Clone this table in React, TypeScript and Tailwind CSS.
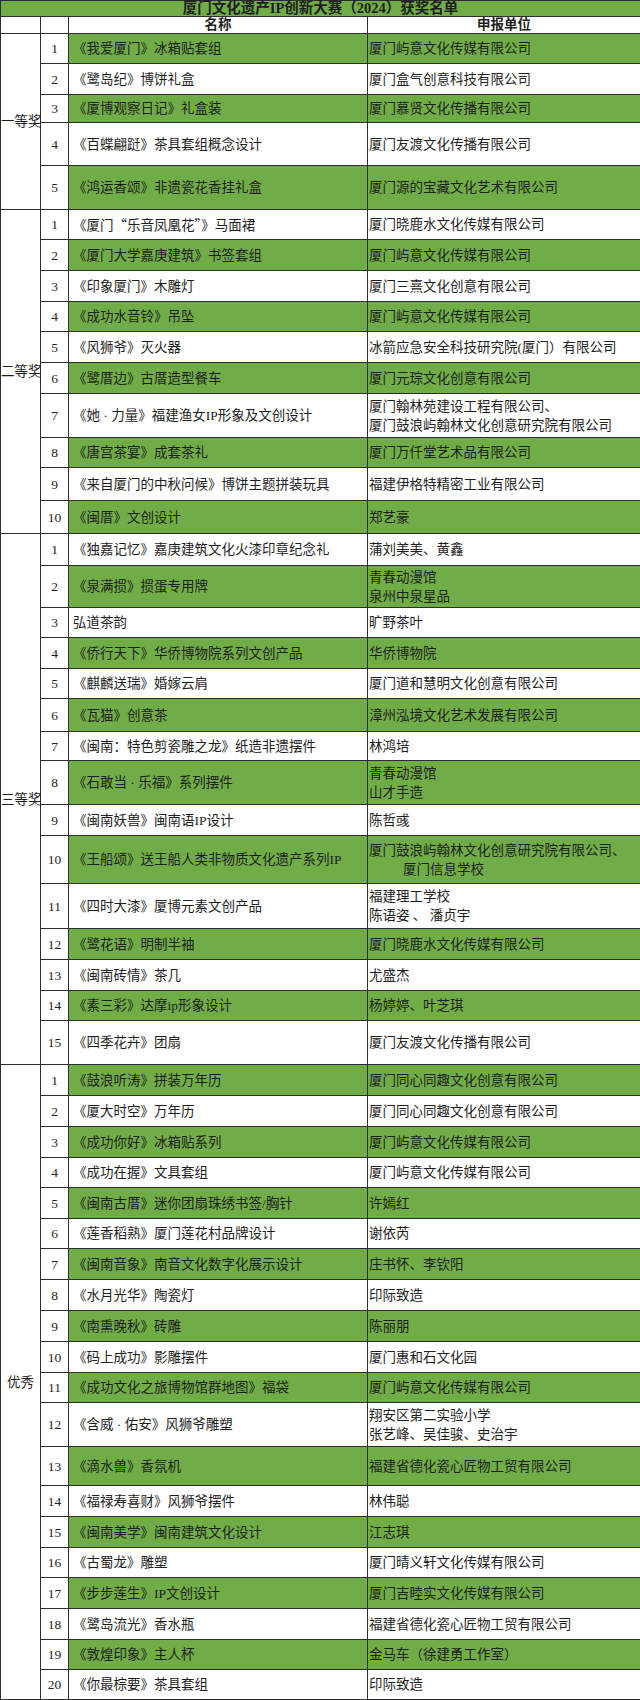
import type { ReactNode } from 'react';

type Row = [name: ReactNode, unit: ReactNode, h: string];

type Group = {
  label: string;
  firstGreen: boolean;
  rows: Row[];
};

const two = (a: string, b: string) => (
  <>
    <div>{a}</div>
    <div>{b}</div>
  </>
);

// full-width quote marks, as the CJK font draws them
const cjk = { fontFamily: '"Noto Sans CJK SC", sans-serif' };

const groups: Group[] = [
  {
    label: '一等奖',
    firstGreen: true,
    rows: [
      ['《我爱厦门》冰箱贴套组', '厦门屿意文化传媒有限公司', 'h-[30px]'],
      ['《鹭岛纪》博饼礼盒', '厦门盒气创意科技有限公司', 'h-[31px]'],
      ['《厦博观察日记》礼盒装', '厦门慕贤文化传播有限公司', 'h-[28px]'],
      ['《百蝶翩跹》茶具套组概念设计', '厦门友渡文化传播有限公司', 'h-[43px]'],
      ['《鸿运香颂》非遗瓷花香挂礼盒', '厦门源的宝藏文化艺术有限公司', 'h-[44px]'],
    ],
  },
  {
    label: '二等奖',
    firstGreen: false,
    rows: [
      [
        <>
          《厦门<span style={cjk}>“</span>乐音凤凰花<span style={cjk}>”</span>》马面裙
        </>,
        '厦门晓鹿水文化传媒有限公司',
        'h-[30px]',
      ],
      ['《厦门大学嘉庚建筑》书签套组', '厦门屿意文化传媒有限公司', 'h-[31px]'],
      ['《印象厦门》木雕灯', '厦门三熹文化创意有限公司', 'h-[31px]'],
      ['《成功水音铃》吊坠', '厦门屿意文化传媒有限公司', 'h-[30px]'],
      ['《风狮爷》灭火器', '冰箭应急安全科技研究院(厦门）有限公司', 'h-[31px]'],
      ['《鹭厝边》古厝造型餐车', '厦门元琮文化创意有限公司', 'h-[31px]'],
      [
        '《她 · 力量》福建渔女IP形象及文创设计',
        two('厦门翰林苑建设工程有限公司、', '厦门鼓浪屿翰林文化创意研究院有限公司'),
        'h-[44px]',
      ],
      ['《唐宫茶宴》成套茶礼', '厦门万仟堂艺术品有限公司', 'h-[30px]'],
      ['《来自厦门的中秋问候》博饼主题拼装玩具', '福建伊格特精密工业有限公司', 'h-[33px]'],
      ['《闽厝》文创设计', '郑艺豪', 'h-[33px]'],
    ],
  },
  {
    label: '三等奖',
    firstGreen: false,
    rows: [
      ['《独嘉记忆》嘉庚建筑文化火漆印章纪念礼', '蒲刘美美、黄鑫', 'h-[32px]'],
      ['《泉满掼》掼蛋专用牌', two('青春动漫馆', '泉州中泉星品'), 'h-[42px]'],
      ['弘道茶韵', '旷野茶叶', 'h-[30px]'],
      ['《侨行天下》华侨博物院系列文创产品', '华侨博物院', 'h-[31px]'],
      ['《麒麟送瑞》婚嫁云肩', '厦门道和慧明文化创意有限公司', 'h-[30px]'],
      ['《瓦猫》创意茶', '漳州泓境文化艺术发展有限公司', 'h-[33px]'],
      ['《闽南：特色剪瓷雕之龙》纸造非遗摆件', '林鸿培', 'h-[29px]'],
      ['《石敢当 · 乐福》系列摆件', two('青春动漫馆', '山才手造'), 'h-[44px]'],
      ['《闽南妖兽》闽南语IP设计', '陈哲彧', 'h-[31px]'],
      [
        '《王船颂》送王船人类非物质文化遗产系列IP',
        <>
          <div>厦门鼓浪屿翰林文化创意研究院有限公司、</div>
          <div className="pl-[34px]">厦门信息学校</div>
        </>,
        'h-[48px]',
      ],
      ['《四时大漆》厦博元素文创产品', two('福建理工学校', '陈语姿 、 潘贞宇'), 'h-[45px]'],
      ['《鹭花语》明制半袖', '厦门晓鹿水文化传媒有限公司', 'h-[31px]'],
      ['《闽南砖情》茶几', '尤盛杰', 'h-[31px]'],
      ['《素三彩》达摩ip形象设计', '杨婷婷、叶芝琪', 'h-[30px]'],
      ['《四季花卉》团扇', '厦门友渡文化传播有限公司', 'h-[44px]'],
    ],
  },
  {
    label: '优秀',
    firstGreen: true,
    rows: [
      ['《鼓浪听涛》拼装万年历', '厦门同心同趣文化创意有限公司', 'h-[31px]'],
      ['《厦大时空》万年历', '厦门同心同趣文化创意有限公司', 'h-[31px]'],
      ['《成功你好》冰箱贴系列', '厦门屿意文化传媒有限公司', 'h-[31px]'],
      ['《成功在握》文具套组', '厦门屿意文化传媒有限公司', 'h-[30px]'],
      ['《闽南古厝》迷你团扇珠绣书签/胸针', '许嫣红', 'h-[31px]'],
      ['《莲香稻熟》厦门莲花村品牌设计', '谢依芮', 'h-[30px]'],
      ['《闽南音象》南音文化数字化展示设计', '庄书怀、李钦阳', 'h-[31px]'],
      ['《水月光华》陶瓷灯', '印际致造', 'h-[31px]'],
      ['《南熏晚秋》砖雕', '陈丽朋', 'h-[31px]'],
      ['《码上成功》影雕摆件', '厦门惠和石文化园', 'h-[31px]'],
      ['《成功文化之旅博物馆群地图》福袋', '厦门屿意文化传媒有限公司', 'h-[30px]'],
      ['《含威 · 佑安》风狮爷雕塑', two('翔安区第二实验小学', '张艺峰、吴佳骏、史治宇'), 'h-[44px]'],
      ['《滴水兽》香氛机', '福建省德化瓷心匠物工贸有限公司', 'h-[39px]'],
      ['《福禄寿喜财》风狮爷摆件', '林伟聪', 'h-[31px]'],
      ['《闽南美学》闽南建筑文化设计', '江志琪', 'h-[31px]'],
      ['《古蜀龙》雕塑', '厦门晴义轩文化传媒有限公司', 'h-[30px]'],
      ['《步步莲生》IP文创设计', '厦门吉睦实文化传媒有限公司', 'h-[31px]'],
      ['《鹭岛流光》香水瓶', '福建省德化瓷心匠物工贸有限公司', 'h-[31px]'],
      ['《敦煌印象》主人杯', '金马车（徐建勇工作室）', 'h-[30px]'],
      ['《你最棕要》茶具套组', '印际致造', 'h-[30px]'],
    ],
  },
];

const cell = 'border border-[#2e2e2e] p-0 align-middle';

export default function App() {
  return (
    <div
      className="w-[640px] bg-white text-[#1e1e1e] text-[13.5px] leading-[19px]"
      style={{ fontFamily: '"Liberation Serif", "Noto Sans CJK SC", serif' }}
    >
      <table className="w-[640px] table-fixed border-collapse">
        <colgroup>
          <col className="w-[40px]" />
          <col className="w-[28px]" />
          <col className="w-[299px]" />
          <col className="w-[273px]" />
        </colgroup>
        <tbody>
          <tr className="h-[16px]">
            <td
              colSpan={4}
              className={`${cell} bg-[#71ad47] text-center text-[14.5px] font-bold leading-[15px]`}
            >
              厦门文化遗产IP创新大赛（2024）获奖名单
            </td>
          </tr>
          <tr className="h-[17px]">
            <td className={cell} />
            <td className={cell} />
            <td className={`${cell} text-center font-bold leading-[16px]`}>名称</td>
            <td className={`${cell} text-center font-bold leading-[16px]`}>申报单位</td>
          </tr>
          {groups.map((g) =>
            g.rows.map(([name, unit, h], i) => {
              const green = (i % 2 === 0) === g.firstGreen;
              const fill = green ? 'bg-[#71ad47]' : 'bg-white';
              return (
                <tr key={g.label + i} className={h}>
                  {i === 0 && (
                    <td rowSpan={g.rows.length} className={`${cell} text-center whitespace-nowrap`}>
                      {g.label}
                    </td>
                  )}
                  <td className={`${cell} text-center`}>{i + 1}</td>
                  <td className={`${cell} ${fill} pl-[4px] whitespace-nowrap`}>{name}</td>
                  <td className={`${cell} ${fill} pl-[1px] whitespace-nowrap`}>{unit}</td>
                </tr>
              );
            })
          )}
        </tbody>
      </table>
    </div>
  );
}
